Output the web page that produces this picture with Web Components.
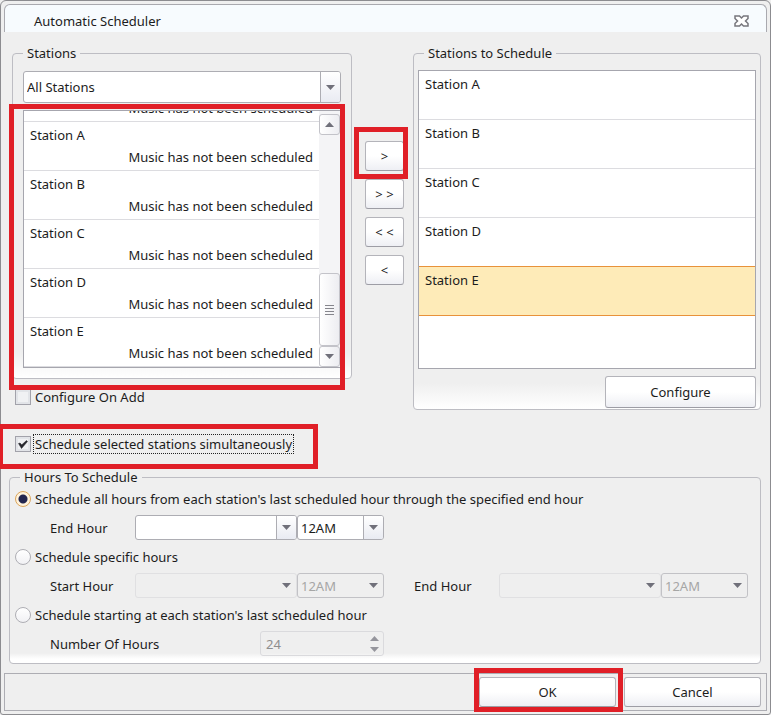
<!DOCTYPE html>
<html lang="en">
<head>
<meta charset="utf-8">
<title>Automatic Scheduler</title>
<style>
    body
    {
        margin: 0;
        background: #efefef;
        color: #1c1c1c;
        font-family: "Noto Sans", "Open Sans", sans-serif;
        font-size: 13px;
        line-height: 20px;
        overflow-x: hidden;
    }
    .top
    {
        display: grid;
        grid-template-columns: 340fr 61px 348fr;
        padding: 0 6px 0 8px;
        align-items: start;
    }
    .stack
    {
        display: flex;
        flex-direction: column;
        gap: 7px;
    }
    .options
    {
        display: flex;
        flex-direction: column;
        align-items: flex-start;
        gap: 27px;
        padding: 8px 0 0 3px;
    }
    .transfer
    {
        display: flex;
        flex-direction: column;
        align-items: center;
        gap: 8px;
        padding: 98px 0 0 4px;
    }
    .transfer push-button
    {
        width: 39px;
    }
    .configure
    {
        width: 151px;
        height: 32px;
        align-self: flex-end;
    }
    .hours
    {
        margin: 13px 6px 9px 5px;
    }
    .sections
    {
        display: flex;
        flex-direction: column;
        gap: 7px;
    }
    .section
    {
        display: flex;
        flex-direction: column;
        align-items: flex-start;
        gap: 6px;
    }
    .fields
    {
        display: flex;
        gap: 30px;
        padding-left: 35px;
    }
    .action
    {
        width: 137px;
    }
</style>
</head>
<body>

<dialog-window heading="Automatic Scheduler">
    <div class="top">
        <div>
            <group-box heading="Stations" style="--pad: 8px 10px 10px">
                <div class="stack">
                    <combo-box label="Station filter" value="All Stations" style="--height: 32px"></combo-box>
                    <call-out style="--inset: -6px -4px -22px -14px">
                        <station-list scroll style="--height: 258px">
                            <station-row status="Music has not been scheduled"></station-row>
                            <station-row status="Music has not been scheduled">Station A</station-row>
                            <station-row status="Music has not been scheduled">Station B</station-row>
                            <station-row status="Music has not been scheduled">Station C</station-row>
                            <station-row status="Music has not been scheduled">Station D</station-row>
                            <station-row status="Music has not been scheduled">Station E</station-row>
                        </station-list>
                    </call-out>
                </div>
            </group-box>
            <div class="options">
                <choice-option type="checkbox">Configure On Add</choice-option>
                <call-out style="--inset: -10px -24px -15px -17px">
                    <choice-option type="checkbox" checked focused>Schedule selected stations simultaneously</choice-option>
                </call-out>
            </div>
        </div>

        <div class="transfer">
            <call-out style="--inset: -14px -4px -8px -11px"><push-button>&gt;</push-button></call-out>
            <push-button>&gt; &gt;</push-button>
            <push-button>&lt; &lt;</push-button>
            <push-button>&lt;</push-button>
        </div>

        <group-box heading="Stations to Schedule" style="--pad: 7px 4px 1px">
            <div class="stack">
                <station-list style="--height: 299px">
                    <station-row>Station A</station-row>
                    <station-row>Station B</station-row>
                    <station-row>Station C</station-row>
                    <station-row>Station D</station-row>
                    <station-row selected>Station E</station-row>
                </station-list>
                <push-button class="configure">Configure</push-button>
            </div>
        </group-box>
    </div>

    <group-box class="hours" heading="Hours To Schedule" style="--pad: 2px 5px 7px">
        <div class="sections">
            <div class="section">
                <choice-option type="radio" checked>Schedule all hours from each station's last scheduled hour through the specified end hour</choice-option>
                <div class="fields">
                    <hour-field label="End Hour"></hour-field>
                </div>
            </div>
            <div class="section">
                <choice-option type="radio">Schedule specific hours</choice-option>
                <div class="fields">
                    <hour-field label="Start Hour" disabled></hour-field>
                    <hour-field label="End Hour" disabled></hour-field>
                </div>
            </div>
            <div class="section">
                <choice-option type="radio">Schedule starting at each station's last scheduled hour</choice-option>
                <div class="fields">
                    <number-field label="Number Of Hours" value="24"></number-field>
                </div>
            </div>
        </div>
    </group-box>

    <call-out slot="actions" style="--inset: -9px -7px -5px -5px"><push-button class="action">OK</push-button></call-out>
    <push-button slot="actions" class="action">Cancel</push-button>
</dialog-window>

<script>
const arrowDown = `<svg width="9" height="5" viewBox="0 0 9 5"><path d="M0 0h9L4.500 5z" fill="#70707a"/></svg>`;
const arrowUp = `<svg width="9" height="5" viewBox="0 0 9 5"><path d="M0 5h9L4.500 0z" fill="#70707a"/></svg>`;

// attaches an open shadow root with the given markup
function render(element, html) {
    element.attachShadow({mode: "open"}).innerHTML = html;
}


class DialogWindow extends HTMLElement {
    constructor() {
        super();
        render(this, `
            <style>
                :host
                {
                    display: block;
                    border: 1px solid #8c8c90;
                    border-radius: 6px 6px 3px 3px;
                    padding: 3px;
                    background: #efefef;
                }
                header
                {
                    display: flex;
                    align-items: center;
                    justify-content: space-between;
                    box-sizing: border-box;
                    height: 28px;
                    padding: 4px 17px 0 29px;
                    border: 1px solid #a9a9af;
                    border-bottom: 0;
                    border-radius: 6px 6px 0 0;
                    background: #f7fbfe;
                    margin-bottom: 11px;
                }
                h1
                {
                    margin: 0;
                    font-size: 13px;
                    font-weight: 400;
                }
                .close
                {
                    display: flex;
                    border: 0;
                    padding: 0;
                    background: none;
                }
                footer
                {
                    display: flex;
                    justify-content: flex-end;
                    gap: 8px;
                    padding: 3px 5px;
                    border: 1px solid #adadb3;
                }
            </style>
            <header>
                <h1></h1>
                <button class="close" aria-label="Close">
                    <svg width="15" height="12" viewBox="0 0 15 12"><path d="M1 1h4.500l2 2 2-2H14v2.500L11.500 6 14 8.500V11H9.500l-2-2-2 2H1V8.500L3.500 6 1 3.500z" fill="#fff" stroke="#77777d" stroke-width="1.500"/></svg>
                </button>
            </header>
            <slot></slot>
            <footer><slot name="actions"></slot></footer>
        `);
        this.shadowRoot.querySelector("h1").textContent = this.getAttribute("heading");
    }
}


class GroupBox extends HTMLElement {
    constructor() {
        super();
        render(this, `
            <style>
                :host
                {
                    display: block;
                    min-width: 0;
                }
                fieldset
                {
                    margin: 0;
                    min-width: 0;
                    padding: 0;
                    border: 1px solid #bdbdc3;
                    border-radius: 4px;
                    background: linear-gradient(to top, #fff, #efefef 26px);
                }
                legend
                {
                    margin-left: 10px;
                    padding: 0 4px;
                }
                .content
                {
                    padding: var(--pad, 8px);
                }
                :host(.hours) fieldset
                {
                    background: linear-gradient(to top, #fff 4px, #efefef 10px);
                }
            </style>
            <fieldset>
                <legend></legend>
                <div class="content"><slot></slot></div>
            </fieldset>
        `);
        const legend = this.shadowRoot.querySelector("legend");
        legend.textContent = this.getAttribute("heading");
    }
}


// red frame around whatever is slotted in
class CallOut extends HTMLElement {
    constructor() {
        super();
        render(this, `
            <style>
                :host
                {
                    display: block;
                    position: relative;
                }
                .frame
                {
                    position: absolute;
                    z-index: 2;
                    inset: var(--inset);
                    border: 5px solid #e01f27;
                    pointer-events: none;
                }
            </style>
            <slot></slot>
            <div class="frame"></div>
        `);
    }
}


class PushButton extends HTMLElement {
    constructor() {
        super();
        render(this, `
            <style>
                :host
                {
                    display: block;
                    height: 30px;
                }
                button
                {
                    display: block;
                    width: 100%;
                    height: 100%;
                    padding: 0;
                    border: 1px solid #b4b4ba;
                    border-bottom-color: #9d9da5;
                    border-radius: 3px;
                    background: linear-gradient(#fff 50%, #eeeff4);
                    color: inherit;
                    font: inherit;
                    white-space: nowrap;
                }
            </style>
            <button><slot></slot></button>
        `);
    }
}


const selectStyle = `
    .combo
    {
        display: grid;
        grid-template-columns: 1fr 20px;
        box-sizing: border-box;
        height: var(--height, 25px);
        border: 1px solid #adadb3;
        border-radius: 3px;
        background: #fff;
        overflow: hidden;
    }
    select
    {
        grid-area: 1 / 1 / 2 / 3;
        appearance: none;
        min-width: 0;
        margin: 0;
        padding: 0 22px 0 3px;
        border: 0;
        background: none;
        color: inherit;
        font: inherit;
        outline: 0;
    }
    .arrow
    {
        grid-area: 1 / 2;
        display: flex;
        align-items: center;
        justify-content: center;
        border-left: 1px solid #adadb3;
        background: linear-gradient(#fff, #e9ebf2);
        pointer-events: none;
    }
`;

class ComboBox extends HTMLElement {
    constructor() {
        super();
        render(this, `
            <style>
                :host { display: block; }
                ${selectStyle}
            </style>
            <div class="combo">
                <select aria-label="${this.getAttribute("label")}"><option>${this.getAttribute("value")}</option></select>
                <span class="arrow">${arrowDown}</span>
            </div>
        `);
    }
}


class HourField extends HTMLElement {
    constructor() {
        super();
        const off = this.hasAttribute("disabled") ? "disabled" : "";
        render(this, `
            <style>
                :host
                {
                    display: flex;
                    align-items: center;
                }
                ${selectStyle}
                label { width: 85px; }
                .date { width: 162px; }
                .hour { width: 87px; }
                :host([disabled]) .combo
                {
                    background: #efefef;
                    border-color: #c2c2c6;
                }
                :host([disabled]) .date { border-color: #e0e0e2; }
                :host([disabled]) .arrow
                {
                    border-color: transparent;
                    background: none;
                }
                select:disabled
                {
                    color: #a6a6a6;
                    opacity: 1;
                }
            </style>
            <label for="date">${this.getAttribute("label")}</label>
            <div class="combo date">
                <select id="date" ${off}><option></option></select>
                <span class="arrow">${arrowDown}</span>
            </div>
            <div class="combo hour">
                <select aria-label="${this.getAttribute("label")} time" ${off}><option>12AM</option></select>
                <span class="arrow">${arrowDown}</span>
            </div>
        `);
    }
}


class NumberField extends HTMLElement {
    constructor() {
        super();
        render(this, `
            <style>
                :host
                {
                    display: flex;
                    align-items: center;
                }
                label { width: 210px; }
                .spin
                {
                    display: flex;
                    box-sizing: border-box;
                    width: 124px;
                    height: 25px;
                    padding: 0 4px;
                    border: 1px solid #dadadd;
                    border-radius: 3px;
                }
                input
                {
                    appearance: textfield;
                    flex: 1;
                    min-width: 0;
                    padding: 0 1px;
                    border: 0;
                    background: none;
                    color: #8e8e8e;
                    font: inherit;
                }
                input::-webkit-inner-spin-button { display: none; }
                .arrows
                {
                    display: flex;
                    flex-direction: column;
                    justify-content: center;
                    gap: 6px;
                    opacity: 0.7;
                }
            </style>
            <label for="count">${this.getAttribute("label")}</label>
            <div class="spin">
                <input id="count" type="number" value="${this.getAttribute("value")}" disabled>
                <span class="arrows">${arrowUp}${arrowDown}</span>
            </div>
        `);
    }
}


class ChoiceOption extends HTMLElement {
    constructor() {
        super();
        const type = this.getAttribute("type");
        const checked = this.hasAttribute("checked") ? "checked" : "";
        render(this, `
            <style>
                :host { display: block; }
                label
                {
                    display: grid;
                    grid-template-columns: 16px auto;
                    column-gap: 2px;
                    align-items: center;
                }
                input
                {
                    grid-area: 1 / 1;
                    appearance: none;
                    box-sizing: border-box;
                    width: 16px;
                    height: 16px;
                    margin: 0;
                    border: 1px solid #a2a2aa;
                    background: #f0f1f3;
                    box-shadow: inset 0 0 0 2px #e2e4e8;
                }
                input[type=radio]
                {
                    border-color: #aeaeb4;
                    border-radius: 50%;
                    background: linear-gradient(#fff, #f1f1f4);
                    box-shadow: none;
                }
                input[type=radio]:checked
                {
                    border-color: #dba55c;
                    background: radial-gradient(circle, #23264f 4px, #fff3dc 5px);
                }
                svg
                {
                    grid-area: 1 / 1;
                    justify-self: center;
                    visibility: hidden;
                    pointer-events: none;
                }
                input[type=checkbox]:checked + svg { visibility: visible; }
                .text
                {
                    padding: 0 2px;
                    white-space: nowrap;
                }
                :host([focused]) .text
                {
                    padding: 0 1px;
                    border: 1px dotted #222;
                    line-height: 18px;
                }
            </style>
            <label>
                <input type="${type}" ${checked}>
                <svg width="10" height="9" viewBox="0 0 10 9"><path d="M0.500 3.500L3.500 8.500 9.500 1.500 8.500 0.500 3.800 4.800 2 3z" fill="#26262c" stroke="#26262c" stroke-width="0.500"/></svg>
                <span class="text"><slot></slot></span>
            </label>
        `);
        if (type == "radio") {
            // radios in separate shadow roots do not group by name
            this.shadowRoot.querySelector("input").addEventListener("change", () => {
                document.querySelectorAll("choice-option[type=radio]").forEach(other => {
                    if (other != this) other.shadowRoot.querySelector("input").checked = false;
                });
            });
        }
    }
}


class StationList extends HTMLElement {
    constructor() {
        super();
        render(this, `
            <style>
                :host
                {
                    display: flex;
                    box-sizing: border-box;
                    height: var(--height);
                    border: 1px solid #a6a6ae;
                    background: #fff;
                    overflow: hidden;
                }
                .rows
                {
                    display: flex;
                    flex-direction: column;
                    flex: 1;
                    min-width: 0;
                }
                :host([scroll]) .rows { justify-content: flex-end; }
                .bar { display: none; }
                :host([scroll]) .bar
                {
                    display: flex;
                    flex-direction: column;
                    width: 21px;
                    padding-top: 3px;
                    background: #f4f4f6;
                }
                .bar span
                {
                    display: flex;
                    flex-direction: column;
                    align-items: center;
                    justify-content: center;
                    gap: 2px;
                    box-sizing: border-box;
                    height: 21px;
                    border: 1px solid #c3c3c9;
                    border-radius: 3px;
                    background: linear-gradient(to right, #fff, #ededf1);
                }
                .bar .thumb
                {
                    height: 73px;
                    margin-top: auto;
                }
                .thumb i
                {
                    width: 9px;
                    height: 1px;
                    background: #85858c;
                }
            </style>
            <div class="rows"><slot></slot></div>
            <div class="bar">
                <span>${arrowUp}</span>
                <span class="thumb"><i></i><i></i><i></i><i></i></span>
                <span>${arrowDown}</span>
            </div>
        `);
    }
}


class StationRow extends HTMLElement {
    constructor() {
        super();
        render(this, `
            <style>
                :host
                {
                    display: flex;
                    flex-direction: column;
                    flex: none;
                    box-sizing: border-box;
                    height: 49px;
                    padding: 2px 6px 0;
                    border-bottom: 1px solid #dcdce0;
                }
                :host([selected])
                {
                    background: #feebb8;
                    border-bottom-color: #e8923a;
                    box-shadow: 0 -1px #e8923a;
                }
                .name
                {
                    height: 22px;
                    line-height: 22px;
                }
                .status
                {
                    line-height: 22px;
                    text-align: right;
                    white-space: nowrap;
                }
            </style>
            <div class="name"><slot></slot></div>
            <div class="status">${this.getAttribute("status") || ""}</div>
        `);
    }
}


window.customElements.define("dialog-window", DialogWindow)
window.customElements.define("group-box", GroupBox)
window.customElements.define("call-out", CallOut)
window.customElements.define("push-button", PushButton)
window.customElements.define("combo-box", ComboBox)
window.customElements.define("hour-field", HourField)
window.customElements.define("number-field", NumberField)
window.customElements.define("choice-option", ChoiceOption)
window.customElements.define("station-list", StationList)
window.customElements.define("station-row", StationRow)
</script>
</body>
</html>
